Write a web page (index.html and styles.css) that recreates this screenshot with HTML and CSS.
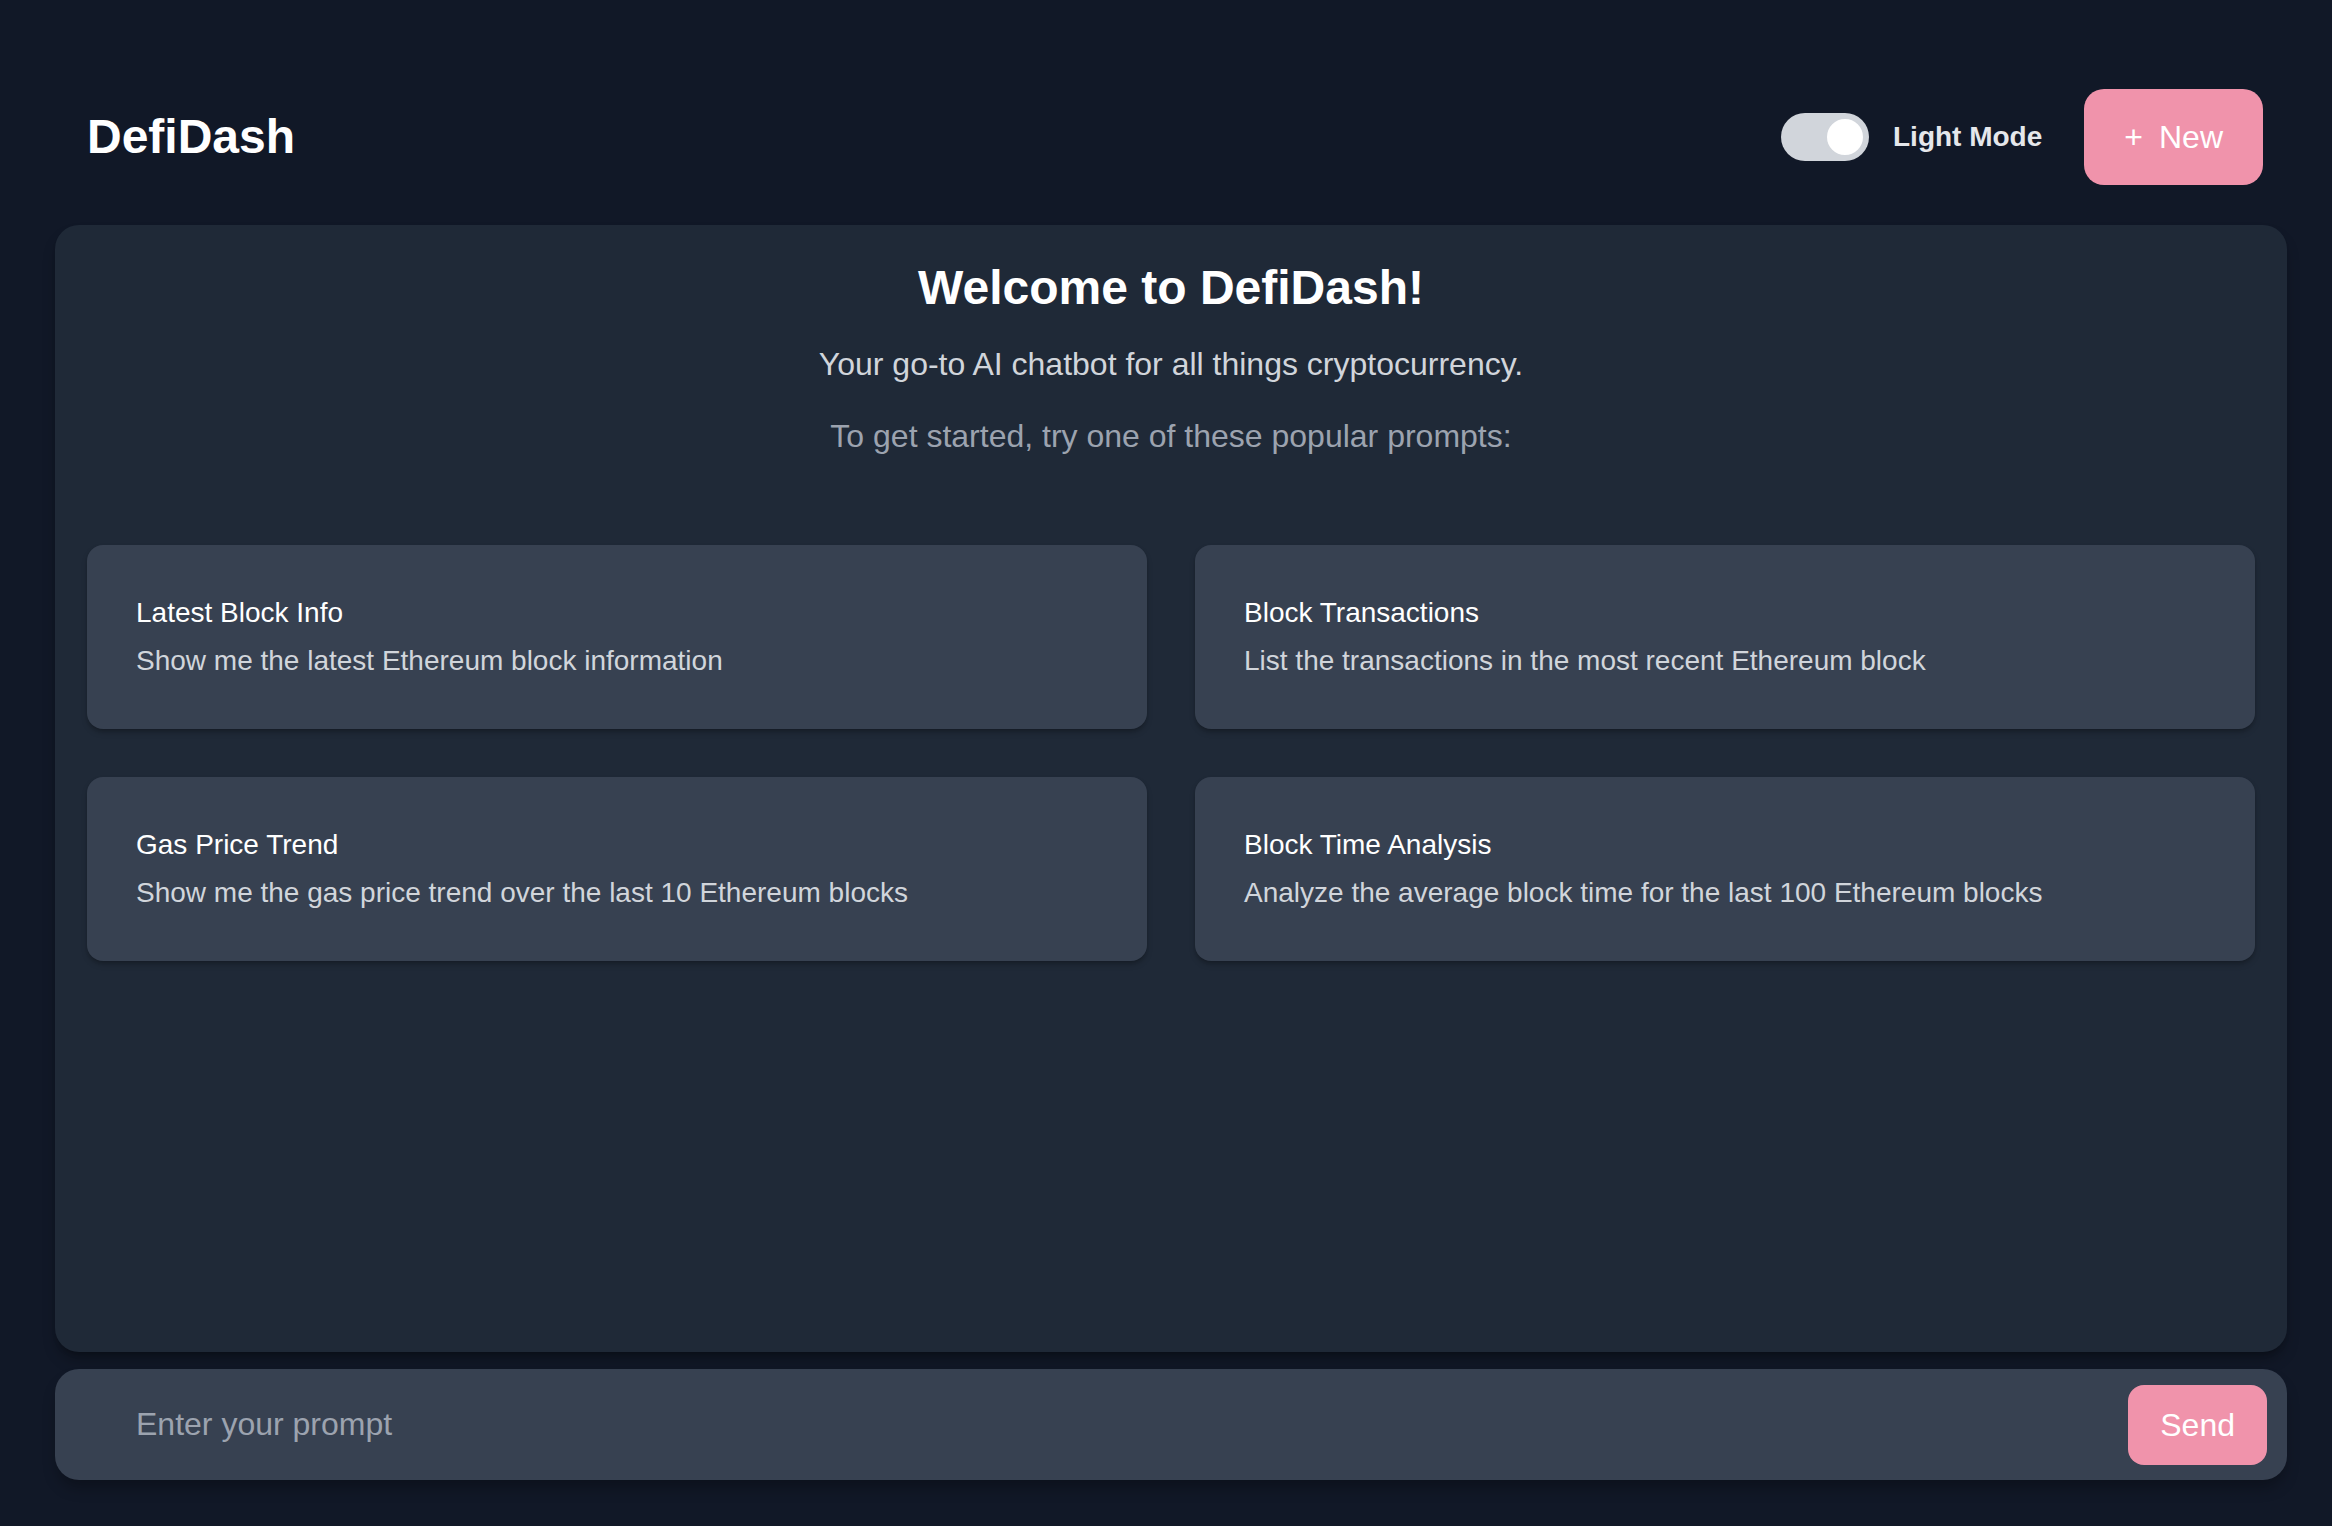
FILE: index.html
```html
<!DOCTYPE html>
<html lang="en">
<head>
<meta charset="utf-8">
<title>DefiDash</title>
<link rel="stylesheet" href="styles.css">
</head>
<body>
<div class="app">
  <header class="header">
    <h1 class="logo">DefiDash</h1>
    <div class="header-actions">
      <label class="toggle">
        <input type="checkbox" class="toggle-input" checked>
        <span class="toggle-track"><span class="toggle-knob"></span></span>
        <span class="toggle-label">Light Mode</span>
      </label>
      <button class="btn-new"><span class="plus">+</span>New</button>
    </div>
  </header>

  <main class="panel">
    <section class="welcome">
      <h2 class="welcome-title">Welcome to DefiDash!</h2>
      <p class="welcome-sub">Your go-to AI chatbot for all things cryptocurrency.</p>
      <p class="welcome-hint">To get started, try one of these popular prompts:</p>
    </section>
    <div class="prompt-grid">
      <div class="prompt-card">
        <div class="prompt-title">Latest Block Info</div>
        <div class="prompt-desc">Show me the latest Ethereum block information</div>
      </div>
      <div class="prompt-card">
        <div class="prompt-title">Block Transactions</div>
        <div class="prompt-desc">List the transactions in the most recent Ethereum block</div>
      </div>
      <div class="prompt-card">
        <div class="prompt-title">Gas Price Trend</div>
        <div class="prompt-desc">Show me the gas price trend over the last 10 Ethereum blocks</div>
      </div>
      <div class="prompt-card">
        <div class="prompt-title">Block Time Analysis</div>
        <div class="prompt-desc">Analyze the average block time for the last 100 Ethereum blocks</div>
      </div>
    </div>
  </main>

  <form class="input-bar">
    <input class="prompt-input" type="text" placeholder="Enter your prompt">
    <button type="button" class="btn-send">Send</button>
  </form>
</div>
</body>
</html>
```

FILE: styles.css
```css
* {
  box-sizing: border-box;
}

html, body {
  margin: 0;
  padding: 0;
  background: #111827;
  font-family: "Liberation Sans", Arial, sans-serif;
  color: #ffffff;
}

.app {
  width: 2332px;
  height: 1526px;
  padding: 89px 45px 46px 55px;
  display: flex;
  flex-direction: column;
}

.header {
  display: flex;
  align-items: center;
  justify-content: space-between;
  height: 96px;
  padding: 0 24px 0 32px;
  margin-bottom: 40px;
}

.logo {
  margin: 0;
  font-size: 48px;
  line-height: 64px;
  font-weight: 700;
  color: #ffffff;
}

.header-actions {
  display: flex;
  align-items: center;
  gap: 42px;
}

.toggle {
  display: flex;
  align-items: center;
  cursor: pointer;
}

.toggle-input {
  display: none;
}

.toggle-track {
  position: relative;
  width: 88px;
  height: 48px;
  border-radius: 24px;
  background: #d1d5db;
}

.toggle-knob {
  position: absolute;
  top: 4px;
  left: 44px;
  width: 40px;
  height: 40px;
  border-radius: 50%;
  background: #ffffff;
  border: 2px solid #d1d5db;
}

.toggle-label {
  margin-left: 24px;
  font-size: 28px;
  line-height: 40px;
  font-weight: 700;
  color: #e5e7eb;
}

.btn-new {
  display: flex;
  align-items: center;
  height: 96px;
  padding: 0 40px;
  border: none;
  border-radius: 20px;
  background: #f093ab;
  color: #ffffff;
  font-family: "Liberation Sans", Arial, sans-serif;
  font-size: 32px;
  line-height: 48px;
  cursor: pointer;
}

.plus {
  margin-right: 16px;
}

.panel {
  flex: 1;
  background: #1f2937;
  border-radius: 24px;
  padding: 31px 32px 32px;
  box-shadow: 0 10px 15px -3px rgba(0, 0, 0, 0.3), 0 4px 6px -4px rgba(0, 0, 0, 0.3);
  display: flex;
  flex-direction: column;
}

.welcome {
  text-align: center;
  margin-bottom: 85px;
}

.welcome-title {
  margin: 0 0 20px;
  font-size: 48px;
  line-height: 64px;
  font-weight: 700;
  color: #ffffff;
}

.welcome-sub {
  margin: 0 0 24px;
  font-size: 32px;
  line-height: 48px;
  color: #d1d5db;
}

.welcome-hint {
  margin: 0;
  font-size: 32px;
  line-height: 48px;
  color: #9ca3af;
}

.prompt-grid {
  display: grid;
  grid-template-columns: 1fr 1fr;
  gap: 48px;
}

.prompt-card {
  background: #374151;
  border-radius: 16px;
  padding: 48px 48px 48px 49px;
  height: 184px;
  box-shadow: 0 4px 6px -1px rgba(0, 0, 0, 0.25), 0 2px 4px -2px rgba(0, 0, 0, 0.2);
  cursor: pointer;
}

.prompt-title {
  font-size: 28px;
  line-height: 40px;
  color: #ffffff;
  margin-bottom: 8px;
}

.prompt-desc {
  font-size: 28px;
  line-height: 40px;
  color: #d1d5db;
}

.input-bar {
  margin: 17px 0 0;
  height: 111px;
  display: flex;
  align-items: center;
  background: #374151;
  border-radius: 24px;
  padding: 0 20px 0 16px;
  box-shadow: 0 10px 15px -3px rgba(0, 0, 0, 0.3);
}

.prompt-input {
  flex: 1;
  height: 80px;
  border: none;
  outline: none;
  background: transparent;
  padding: 0 0 0 65px;
  font-family: "Liberation Sans", Arial, sans-serif;
  font-size: 32px;
  color: #ffffff;
}

.prompt-input::placeholder {
  color: #9ca3af;
}

.btn-send {
  height: 80px;
  padding: 0 32px;
  border: none;
  border-radius: 16px;
  background: #f093ab;
  color: #ffffff;
  font-family: "Liberation Sans", Arial, sans-serif;
  font-size: 32px;
  line-height: 48px;
  cursor: pointer;
}
```
